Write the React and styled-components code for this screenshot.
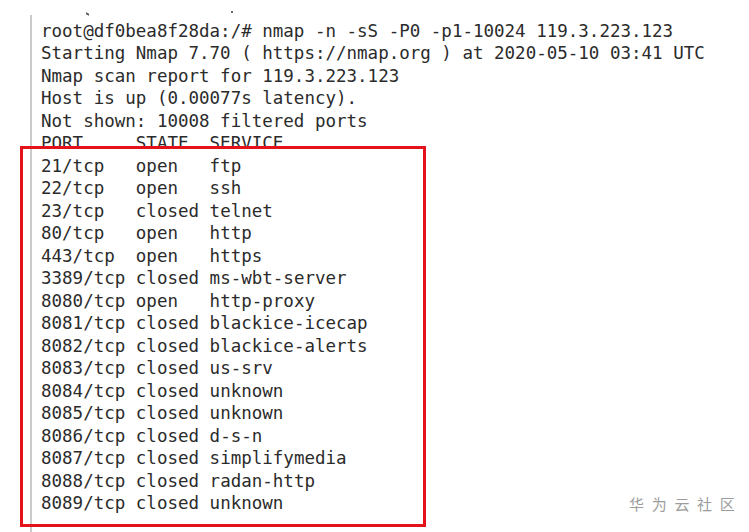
import styled, { createGlobalStyle } from 'styled-components';

const GlobalStyle = createGlobalStyle`
  html, body {
    margin: 0;
    padding: 0;
    background: #ffffff;
  }
`;

const Screen = styled.div`
  position: relative;
  display: flex;
  flex-direction: column;
  width: 749px;
  height: 532px;
  overflow: hidden;
  background: #ffffff;
`;

// leftovers of the previous prompt line, cut off by the screenshot
const Stub = styled.div`
  display: flex;
  align-items: flex-end;
  height: 15px;
  padding-left: 86px;
  gap: 142px;
`;

const Tick = styled.span`
  display: block;
  width: 3px;
  height: 2px;
  background: #555;
  transform: skewY(30deg);
`;

const Dot = styled.span`
  display: block;
  width: 2px;
  height: 2px;
  margin-bottom: 2px;
  background: #666;
`;

const Terminal = styled.div`
  flex: 1;
  margin-left: 30px;
  border-left: 2px solid #cbcbcb;
  padding: 4.5px 0 0 9px;
  font-family: 'DejaVu Sans Mono', 'Liberation Mono', monospace;
  font-size: 17.5px;
  line-height: 22.5px;
  color: #2b2b2b;
`;

const Line = styled.div`
  white-space: pre;
  height: 22.5px;
`;

const Highlight = styled.div`
  position: absolute;
  left: 20px;
  top: 146px;
  width: 406px;
  height: 381px;
  box-sizing: border-box;
  border: 3px solid #e5121b;
  pointer-events: none;
`;

const Watermark = styled.div`
  position: absolute;
  left: 629px;
  top: 494px;
  font-family: 'Noto Sans CJK SC', 'Noto Sans', sans-serif;
  font-size: 15px;
  line-height: 20px;
  letter-spacing: 7.7px;
  color: #9c9c9c;
`;

const header = [
  'root@df0bea8f28da:/# nmap -n -sS -P0 -p1-10024 119.3.223.123',
  'Starting Nmap 7.70 ( https://nmap.org ) at 2020-05-10 03:41 UTC',
  'Nmap scan report for 119.3.223.123',
  'Host is up (0.00077s latency).',
  'Not shown: 10008 filtered ports',
  'PORT     STATE  SERVICE',
];

const ports = [
  ['21/tcp', 'open', 'ftp'],
  ['22/tcp', 'open', 'ssh'],
  ['23/tcp', 'closed', 'telnet'],
  ['80/tcp', 'open', 'http'],
  ['443/tcp', 'open', 'https'],
  ['3389/tcp', 'closed', 'ms-wbt-server'],
  ['8080/tcp', 'open', 'http-proxy'],
  ['8081/tcp', 'closed', 'blackice-icecap'],
  ['8082/tcp', 'closed', 'blackice-alerts'],
  ['8083/tcp', 'closed', 'us-srv'],
  ['8084/tcp', 'closed', 'unknown'],
  ['8085/tcp', 'closed', 'unknown'],
  ['8086/tcp', 'closed', 'd-s-n'],
  ['8087/tcp', 'closed', 'simplifymedia'],
  ['8088/tcp', 'closed', 'radan-http'],
  ['8089/tcp', 'closed', 'unknown'],
];

function App() {
  return (
    <>
      <GlobalStyle />
      <Screen>
        <Stub>
          <Tick />
          <Dot />
        </Stub>
        <Terminal>
          {header.map((text, i) => (
            <Line key={i}>{text}</Line>
          ))}
          {ports.map(([port, state, service]) => (
            <Line key={port}>
              {port.padEnd(9)}
              {state.padEnd(7)}
              {service}
            </Line>
          ))}
        </Terminal>
        <Highlight />
        <Watermark>华为云社区</Watermark>
      </Screen>
    </>
  );
}

export default App;
